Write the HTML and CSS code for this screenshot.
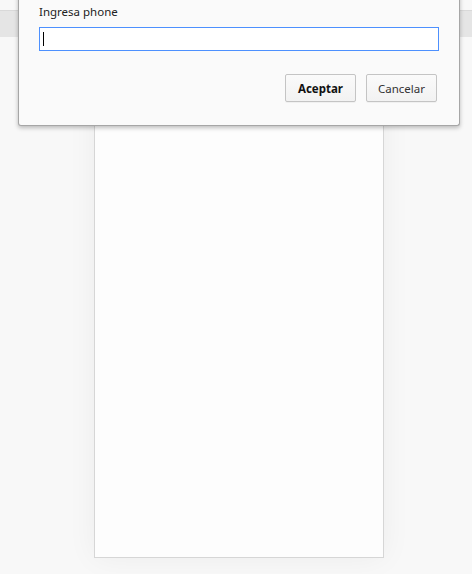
FILE: index.html
```html
<!DOCTYPE html>
<html lang="es">
<head>
<meta charset="utf-8">
<title>Ingresa phone</title>
<link rel="stylesheet" href="styles.css">
</head>
<body>
<div class="page">
  <div class="toolbar"></div>
  <div class="phone"></div>
</div>
<div class="dialog">
  <div class="label">Ingresa phone</div>
  <div class="field"><span class="caret"></span></div>
  <div class="actions">
    <button class="btn btn-primary">Aceptar</button>
    <button class="btn">Cancelar</button>
  </div>
</div>
</body>
</html>
```
FILE: styles.css
```css
html, body {
  margin: 0;
  padding: 0;
  background: #f8f8f8;
  font-family: "Noto Sans", "Open Sans", sans-serif;
  font-size: 11.5px;
  color: #333;
}
.page {
  display: flex;
  flex-direction: column;
  height: 574px;
  overflow: hidden;
}
.toolbar {
  margin-top: 10px;
  height: 26px;
  border-top: 1px solid #d9d9d9;
  background: #e5e5e5;
  flex: none;
}
.phone {
  margin-top: 10px;
  margin-left: 94px;
  width: 290px;
  height: 511px;
  box-sizing: border-box;
  background: #fdfdfd;
  border: 1px solid #d6d6d6;
  box-shadow: 0 0 28px rgba(0, 0, 0, 0.05);
  flex: none;
}
.dialog {
  position: absolute;
  left: 18px;
  top: -10px;
  box-sizing: content-box;
  width: 400px;
  padding: 12px 20px 23px 20px;
  background: #fafafa;
  border: 1px solid #a6a6a6;
  border-top: none;
  border-radius: 0 0 3px 3px;
  box-shadow: 0 2px 4px rgba(0, 0, 0, 0.25);
}
.label {
  line-height: 16px;
  height: 16px;
  margin-top: 2px;
  color: #222;
}
.field {
  margin-top: 7px;
  height: 22px;
  border: 1px solid #4d90fe;
  background: #fff;
  display: flex;
  align-items: center;
  padding-left: 3px;
}
.caret {
  width: 1px;
  height: 14px;
  background: #000;
}
.actions {
  margin-top: 23px;
  display: flex;
  justify-content: flex-end;
  gap: 10px;
  padding-right: 2px;
}
.btn {
  width: 71px;
  height: 28px;
  box-sizing: border-box;
  border: 1px solid #c4c4c4;
  border-radius: 2px;
  background: linear-gradient(#fafafa, #f2f2f2);
  box-shadow: 0 1px 0 rgba(0, 0, 0, 0.04);
  font-family: "Noto Sans", "Open Sans", sans-serif;
  font-size: 11.5px;
  color: #333;
  padding: 0;
}
.btn-primary {
  font-weight: bold;
  color: #111;
}
```
